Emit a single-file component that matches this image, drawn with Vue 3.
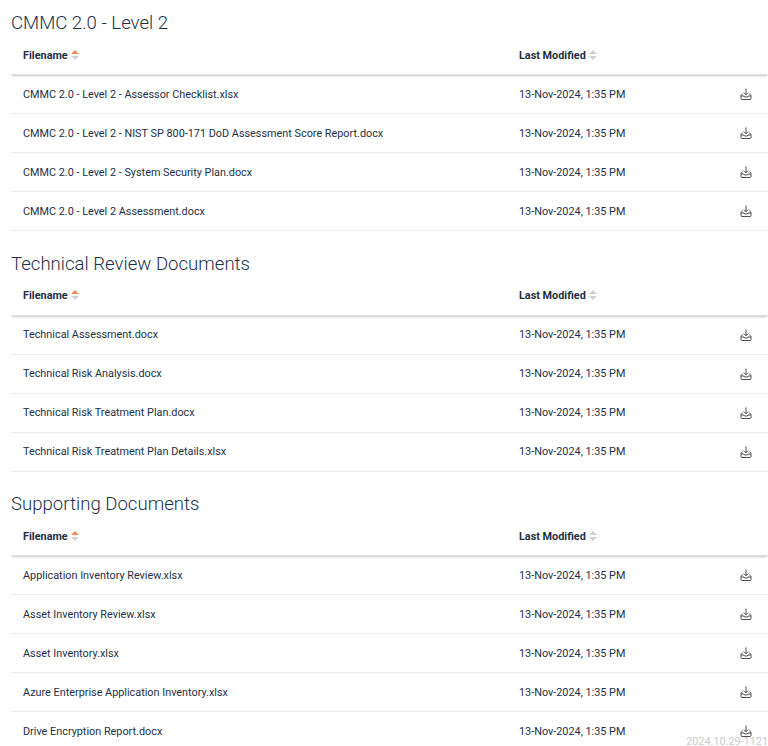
<script setup>
const date = '13-Nov-2024, 1:35 PM'
const sections = [
  { title: 'CMMC 2.0 - Level 2', files: ['CMMC 2.0 - Level 2 - Assessor Checklist.xlsx', 'CMMC 2.0 - Level 2 - NIST SP 800-171 DoD Assessment Score Report.docx', 'CMMC 2.0 - Level 2 - System Security Plan.docx', 'CMMC 2.0 - Level 2 Assessment.docx'] },
  { title: 'Technical Review Documents', files: ['Technical Assessment.docx', 'Technical Risk Analysis.docx', 'Technical Risk Treatment Plan.docx', 'Technical Risk Treatment Plan Details.xlsx'] },
  { title: 'Supporting Documents', files: ['Application Inventory Review.xlsx', 'Asset Inventory Review.xlsx', 'Asset Inventory.xlsx', 'Azure Enterprise Application Inventory.xlsx', 'Drive Encryption Report.docx'] }
]
</script>

<template>
  <div class="page">
    <section v-for="s in sections" :key="s.title" class="section">
      <h2 class="title">{{ s.title }}</h2>
      <div class="row head">
        <div class="name">Filename
          <svg class="sort" viewBox="0 0 8 10" width="8" height="10"><path d="M4 0 8 4H0Z" fill="#ee8f55" /><path d="M4 10 0 6H8Z" fill="#cfd2d4" /></svg>
        </div>
        <div class="date">Last Modified
          <svg class="sort" viewBox="0 0 8 10" width="8" height="10"><path d="M4 0 8 4H0Z" fill="#cfd2d4" /><path d="M4 10 0 6H8Z" fill="#cfd2d4" /></svg>
        </div>
        <div class="act"></div>
      </div>
      <div v-for="f in s.files" :key="f" class="row item">
        <div class="name">{{ f }}</div>
        <div class="date">{{ date }}</div>
        <div class="act">
          <svg viewBox="0 0 12 12" width="12" height="12" fill="none" stroke="#4d4d4d" stroke-width="1">
            <path d="M6 .5V6.5M3.8 4.6 6 6.8 8.2 4.6" />
            <path d="M2.6 5.5 1 7.5V10.5a1 1 0 0 0 1 1H10a1 1 0 0 0 1-1V7.5L9.4 5.5" />
            <path d="M1 8H4L4.6 9H7.4L8 8H11" />
          </svg>
        </div>
      </div>
    </section>
    <div class="stamp">2024.10.29-1121</div>
  </div>
</template>

<style scoped>
.page {
  position: relative;
  height: 746px;
  overflow: hidden;
  padding: 11px 0 0 11px;
  box-sizing: border-box;
  font-family: Roboto, "Liberation Sans", sans-serif;
  color: #1c3046;
  background: #fff;
}
.section { margin-bottom: 20.5px; }
.title {
  margin: 0;
  height: 24px;
  font-size: 18.6px;
  line-height: 24px;
  font-weight: 300;
  color: #1c3046;
}
.row {
  display: grid;
  grid-template-columns: 496px 1fr 28px;
  align-items: center;
  padding-left: 12px;
  font-size: 10.85px;
  box-sizing: border-box;
  height: 39px;
}
.head {
  margin-top: 1px;
  font-weight: 700;
  box-shadow: 0 2px 2px -1px rgba(0, 0, 0, 0.22);
  border-bottom: 1px solid #ddd;
}
.item {
  border-bottom: 1px solid #eeeeee;
  color: #1c3046;
}
.sort { margin-left: 1px; vertical-align: -1px; }
.act { display: flex; align-items: center; }
.stamp {
  position: absolute;
  right: 0;
  bottom: 0;
  font-size: 10.85px;
  line-height: 8px;
  color: #c9c9c9;
  background: rgba(255, 255, 255, 0.6);
  white-space: nowrap;
}
</style>

<style>
html, body { margin: 0; overflow: hidden; background: #fff; }
</style>
